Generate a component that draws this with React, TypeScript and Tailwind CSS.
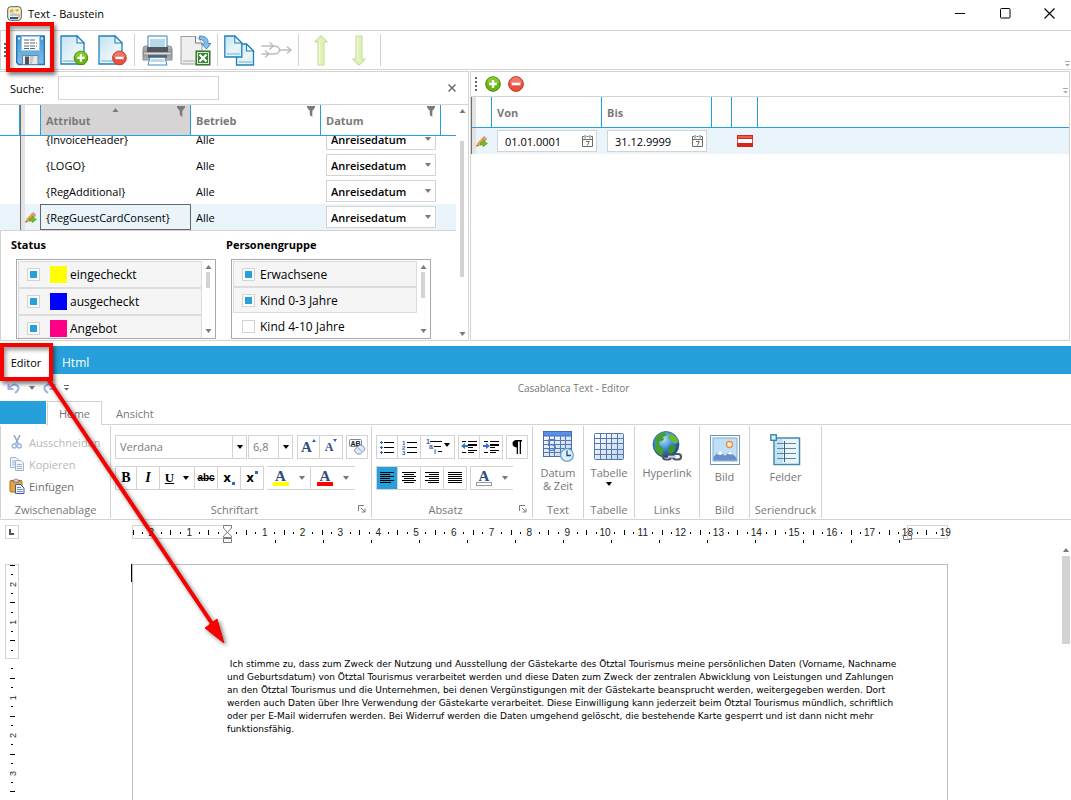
import React, { useState } from "react";

/* ---------- shared glyphs ---------- */

function Triangle({ up = false, className = "" }: { up?: boolean; className?: string }) {
  return (
    <svg width="7" height="4" viewBox="0 0 7 4" className={className} aria-hidden="true">
      <path d={up ? "M0.5 4L3.5 0L6.5 4Z" : "M0.5 0L3.5 4L6.5 0Z"} fill="currentColor" />
    </svg>
  );
}

function SmallTriangle({ className = "" }: { className?: string }) {
  return (
    <svg width="6" height="4" viewBox="0 0 6 4" className={className} aria-hidden="true">
      <path d="M0 0H6L3.5 3.5H2.5Z" fill="currentColor" />
    </svg>
  );
}

function Funnel() {
  return (
    <svg width="8" height="11" viewBox="0 0 8 11" aria-hidden="true">
      <path d="M0 0H8V1.5L5.3 5V11L2.8 9V5L0 1.5Z" fill="#7a7a7a" />
    </svg>
  );
}

function PencilPlus() {
  return (
    <svg width="12" height="11" viewBox="0 0 12 11" aria-hidden="true">
      <path d="M0.5 10.2L2 6.8L6.5 2L9.5 4.5L4.5 9.3Z" fill="#e9a23b" stroke="#c08a35" strokeWidth="0.5" />
      <path d="M6.5 2L8.3 0.6L10.8 2.8L9.5 4.5Z" fill="#e9a49b" stroke="#96655f" strokeWidth="0.5" />
      <path d="M0.3 10.6L1 8.9L2.2 10Z" fill="#555" />
      <path d="M4.5 6.7H7V4.2L11.5 7.5L7 10.8V8.9H4.5Z" fill="#6cbd27" stroke="#4c9416" strokeWidth="0.5" />
    </svg>
  );
}

function PlusBadge({ x = 0, y = 0, s = 1 }: { x?: number; y?: number; s?: number }) {
  return (
    <g transform={`translate(${x} ${y}) scale(${s})`}>
      <circle cx="8" cy="8" r="7.3" fill="#69b512" stroke="#478a0b" strokeWidth="1" />
      <path d="M2 7a6 6 0 0 1 12 0q-6 2-12 0Z" fill="#8fd03a" opacity="0.75" />
      <path d="M8 4V12M4 8H12" stroke="#fff" strokeWidth="2.4" />
    </g>
  );
}

function MinusBadge({ x = 0, y = 0, s = 1 }: { x?: number; y?: number; s?: number }) {
  return (
    <g transform={`translate(${x} ${y}) scale(${s})`}>
      <circle cx="8" cy="8" r="7.4" fill="#ea4f3d" stroke="#c63a2c" strokeWidth="1" />
      <path d="M2 7a6 6 0 0 1 12 0q-6 2-12 0Z" fill="#f5877a" opacity="0.7" />
      <path d="M3.6 8H12.4" stroke="#fff" strokeWidth="2.6" />
    </g>
  );
}

function SheetShape({ x = 0, y = 0, w = 23, h = 28 }: { x?: number; y?: number; w?: number; h?: number }) {
  const f = 7;
  return (
    <g transform={`translate(${x} ${y})`}>
      <path d={`M0 0H${w - f}L${w} ${f}V${h}H0Z`} fill="url(#sheet)" stroke="#2280b8" strokeWidth="1.3" />
      <path d={`M${w - f} 0V${f}H${w}Z`} fill="#eef8fc" stroke="#2280b8" strokeWidth="1.1" />
      <path d={`M2 ${h - 4}H${w - 2}V${h - 2}H2Z`} fill="#a8d3e4" />
    </g>
  );
}

function Defs() {
  return (
    <svg width="0" height="0" className="absolute" aria-hidden="true">
      <defs>
        <linearGradient id="sheet" x1="0" y1="0" x2="1" y2="1">
          <stop offset="0" stopColor="#c4e2ef" />
          <stop offset="0.6" stopColor="#e9f5fa" />
          <stop offset="1" stopColor="#d4eaf3" />
        </linearGradient>
        <linearGradient id="blueV" x1="0" y1="0" x2="0" y2="1">
          <stop offset="0" stopColor="#4298d6" />
          <stop offset="1" stopColor="#7fc0ec" />
        </linearGradient>
        <linearGradient id="greyV" x1="0" y1="0" x2="0" y2="1">
          <stop offset="0" stopColor="#b9bcc1" />
          <stop offset="0.5" stopColor="#8c9096" />
          <stop offset="1" stopColor="#b4b7bb" />
        </linearGradient>
        <linearGradient id="gridV" x1="0" y1="0" x2="1" y2="1">
          <stop offset="0" stopColor="#ffffff" />
          <stop offset="1" stopColor="#bcd3ee" />
        </linearGradient>
        <radialGradient id="globe" cx="0.4" cy="0.3" r="0.7">
          <stop offset="0" stopColor="#b8e3fb" />
          <stop offset="0.5" stopColor="#3b8fdc" />
          <stop offset="1" stopColor="#123f95" />
        </radialGradient>
      </defs>
    </svg>
  );
}

/* ---------- main toolbar icons ---------- */

const SaveIcon = () => (
  <svg width="29" height="31" viewBox="0 0 29 31" aria-hidden="true">
    <path d="M0.7 1H28.3V29.5H2.5L0.7 27.5Z" fill="url(#blueV)" stroke="#2476b4" strokeWidth="1.4" />
    <rect x="5.5" y="1.5" width="18" height="14" fill="#fbfdfe" stroke="#9cc8e4" />
    <path d="M8 5H20M8 8H21M8 11H21M8 13.5H20" stroke="#5d6871" strokeWidth="1" strokeDasharray="5 1" />
    <path d="M2 2.5H4V4.5H2ZM25 2.5H27V4.5H25Z" fill="#d9eefb" />
    <path d="M6.5 29.5V20.5H22V29.5Z" fill="#e8eaec" stroke="#738798" />
    <rect x="9" y="21.5" width="4" height="8" fill="#4d545c" />
    <path d="M14 21H18L16 29H14Z" fill="#c3c8cd" />
  </svg>
);

const NewIcon = () => (
  <svg width="29" height="31" viewBox="0 0 29 31" aria-hidden="true">
    <SheetShape x={1} y={1} />
    <PlusBadge x={13.5} y={15.5} s={0.93} />
  </svg>
);

const DeleteIcon = () => (
  <svg width="29" height="31" viewBox="0 0 29 31" aria-hidden="true">
    <SheetShape x={1} y={1} />
    <MinusBadge x={14} y={15.5} s={0.93} />
  </svg>
);

const PrintIcon = () => (
  <svg width="31" height="31" viewBox="0 0 31 31" aria-hidden="true">
    <path d="M1 14Q1 11 4 11H27Q30 11 30 14V25H1Z" fill="url(#greyV)" stroke="#85898e" />
    <path d="M6 1H25V14H6Z" fill="#fff" stroke="#2d81bd" />
    <path d="M8 4H23V12H8Z" fill="#b6d9ec" />
    <path d="M5 12H26V17H5Z" fill="#53575c" />
    <path d="M2 18.5H29" stroke="#d8dadd" strokeWidth="1.5" />
    <path d="M6 20H25V23H6Z" fill="#606469" />
    <path d="M8 22.5H23L25 30H6Z" fill="#fff" stroke="#3e8fc3" />
    <path d="M9 24H22L23 27H8Z" fill="#b9dcec" />
  </svg>
);

const ExportIcon = () => (
  <svg width="31" height="31" viewBox="0 0 31 31" aria-hidden="true">
    <path d="M1 1.5H16L22 7.5V29H1Z" fill="#efefef" stroke="#9d9d9d" />
    <path d="M15.5 1.5V8H22" fill="#fff" stroke="#777" />
    <path d="M3 25H15V27H3Z" fill="#cdcdcd" />
    <path d="M19.5 1C26 1 28.5 4 28 8.5H31L26.5 14L21.5 9H24.5C24.5 6 23 4.7 19.5 4.3Z" fill="#86bde8" stroke="#3780ba" strokeWidth="0.9" />
    <rect x="16" y="16" width="14" height="14" fill="#3b8133" stroke="#2e6f28" />
    <rect x="17.5" y="17.5" width="11" height="11" fill="none" stroke="#dbeed4" />
    <path d="M19.5 19.5L26.5 26.5M26.5 19.5L19.5 26.5" stroke="#fff" strokeWidth="2.2" />
  </svg>
);

const CopyIcon = () => (
  <svg width="31" height="31" viewBox="0 0 31 31" aria-hidden="true">
    <SheetShape x={12.5} y={9} w={17} h={21} />
    <SheetShape x={0.8} y={1} w={17} h={21} />
  </svg>
);

const MergeIcon = () => (
  <svg width="31" height="18" viewBox="0 0 31 18" fill="none" stroke="#bcbcbc" strokeWidth="1.4" aria-hidden="true">
    <path d="M0.5 5H12C17 5 18.5 7 18.5 9S17 13 12 13H0.5M18.5 9H30M8.5 1.5L12.5 5L8.5 8.5M4 9.5L8 13L4 16.5M26 5.5L30 9L26 12.5" />
  </svg>
);

const BigArrow = ({ down = false }: { down?: boolean }) => (
  <svg width="14" height="31" viewBox="0 0 14 31" aria-hidden="true">
    <path
      d={down ? "M4 1H10V24H13.3L7 30.3L0.7 24H4Z" : "M4 30H10V7H13.3L7 0.7L0.7 7H4Z"}
      fill="#e2f1b6"
      stroke="#c6dfa0"
      strokeWidth="1.1"
    />
    <path d={down ? "M5 2H6V25H5Z" : "M5 6H6V29H5Z"} fill="#f3f9dc" />
  </svg>
);

function ToolButton({ label, className, children }: { label: string; className: string; children: React.ReactNode }) {
  return (
    <button type="button" aria-label={label} className={`relative flex shrink-0 items-center justify-center ${className}`}>
      {children}
    </button>
  );
}

const ToolDivider = () => <span className="h-8 w-px shrink-0 bg-[#d4d2d3]" />;

/* ---------- title bar and toolbar ---------- */

function TitleBar() {
  return (
    <header className="flex h-[30px] shrink-0 items-center bg-white pl-[7px]">
      <svg width="15" height="15" viewBox="0 0 15 15" className="mb-1" aria-hidden="true">
        <rect x="0.7" y="0.7" width="13.6" height="13.6" rx="3" fill="#f6f2e0" stroke="#555" />
        <path d="M2.5 4L6 2.5L7 6L3 7ZM8 3H12V5L9 6Z" fill="#e5b53c" />
        <path d="M3 8L7 7L12 8.5V10H3Z" fill="#b9c7c9" />
        <path d="M3 11H11V13H3Z" fill="#24579a" />
        <path d="M11 7L13 8V12H11Z" fill="#e2c468" />
      </svg>
      <h1 className="ml-[6px] flex-1 pb-[2px] text-[11px] leading-4 text-black">Text - Baustein</h1>
      <div className="flex h-full pb-1">
        <button type="button" aria-label="Minimieren" className="flex w-[46px] items-center justify-center">
          <svg width="10" height="10" viewBox="0 0 10 10"><path d="M0 5.5H10" stroke="#000" /></svg>
        </button>
        <button type="button" aria-label="Maximieren" className="flex w-[45px] items-center justify-center">
          <svg width="11" height="11" viewBox="0 0 11 11"><rect x="0.5" y="0.5" width="9.5" height="9.5" rx="1" fill="none" stroke="#000" /></svg>
        </button>
        <button type="button" aria-label="Schließen" className="flex w-[43px] items-center justify-center">
          <svg width="11" height="11" viewBox="0 0 11 11"><path d="M0.5 0.5L10.5 10.5M10.5 0.5L0.5 10.5" stroke="#000" strokeWidth="1.1" /></svg>
        </button>
      </div>
    </header>
  );
}

function Grip() {
  return (
    <svg width="3" height="14" viewBox="0 0 3 14" className="shrink-0" aria-hidden="true">
      <path d="M0 0H2V2H0ZM0 4H2V6H0ZM0 8H2V10H0ZM0 12H2V14H0Z" fill="#666" />
    </svg>
  );
}

function Overflow() {
  return (
    <svg width="7" height="6" viewBox="0 0 7 6" aria-hidden="true">
      <path d="M1 0.5H6" stroke="#aaa" />
      <path d="M1 3H6L3.5 5.5Z" fill="#aaa" />
    </svg>
  );
}

function MainToolbar() {
  return (
    <div role="toolbar" className="flex h-10 shrink-0 items-center border border-r-0 border-[#d4d2d3] pl-[3px]">
      <Grip />
      <ToolButton label="Speichern" className="ml-[3px] h-8 w-10">
        <SaveIcon />
        <span className="pointer-events-none absolute -left-1 -top-3 h-[50px] w-12 border-4 border-[#f70000] shadow-[2px_3px_4px_rgba(0,0,0,0.5),inset_2px_3px_4px_rgba(0,0,0,0.4)]" />
      </ToolButton>
      <ToolButton label="Neu" className="ml-[9px] h-8 w-[30px]"><NewIcon /></ToolButton>
      <ToolButton label="Löschen" className="ml-2 h-8 w-[30px]"><DeleteIcon /></ToolButton>
      <div className="mx-[7px] flex"><ToolDivider /></div>
      <ToolButton label="Drucken" className="h-8 w-[31px]"><PrintIcon /></ToolButton>
      <ToolButton label="Exportieren" className="ml-[7px] h-8 w-[31px]"><ExportIcon /></ToolButton>
      <div className="mx-[6px] flex"><ToolDivider /></div>
      <ToolButton label="Kopieren" className="h-8 w-[31px]"><CopyIcon /></ToolButton>
      <ToolButton label="Zusammenführen" className="ml-[6px] h-8 w-[31px]"><MergeIcon /></ToolButton>
      <div className="ml-[6px] flex"><ToolDivider /></div>
      <ToolButton label="Nach oben" className="ml-[6px] h-8 w-[31px]"><BigArrow /></ToolButton>
      <ToolButton label="Nach unten" className="ml-[7px] h-8 w-[31px]"><BigArrow down /></ToolButton>
      <div className="ml-[6px] flex flex-1"><ToolDivider /></div>
      <div className="self-end pb-[2px]"><Overflow /></div>
    </div>
  );
}

/* ---------- left panel ---------- */

const rows = ["{InvoiceHeader}", "{LOGO}", "{RegAdditional}", "{RegGuestCardConsent}"];

function HeadCell({ title, active = false }: { title: string; active?: boolean }) {
  return (
    <th
      scope="col"
      className={`relative h-[31px] border-b border-r border-[#26a0da] pl-[5px] pt-[2px] text-left font-bold text-[#7a7a7a] ${active ? "border-l bg-[#d6d4d5]" : ""}`}
    >
      {title}
      {active && <Triangle up className="absolute left-[71px] top-[3px] text-[#7a7a7a]" />}
      <span className="absolute right-[5px] top-px"><Funnel /></span>
    </th>
  );
}

function AttributeTable() {
  return (
    <table className="w-full table-fixed border-separate border-spacing-0 text-[11px] leading-4">
      <colgroup>
        <col className="w-5" />
        <col className="w-5" />
        <col className="w-[151px]" />
        <col className="w-[130px]" />
        <col className="w-[120px]" />
        <col />
      </colgroup>
      <thead>
        <tr>
          <th className="border-b border-r border-[#26a0da]" />
          <th className="border-b border-l border-b-[#26a0da] border-l-[#6e6e6e]"><span className="block h-[30px] w-1 bg-[#e3e3e3]" /></th>
          <HeadCell title="Attribut" active />
          <HeadCell title="Betrieb" />
          <HeadCell title="Datum" />
          <th className="border-b border-[#26a0da]" />
        </tr>
      </thead>
      <tbody>
        {rows.map((name, i) => {
          const first = i === 0;
          const selected = i === 3;
          const clip = first ? "h-4" : "h-[26px]";
          return (
            <tr key={name} className={selected ? "bg-[#e9f5fb]" : ""}>
              <td className="p-0" />
              <td className="border-l border-[#6e6e6e] p-0">
                <div className={`flex items-stretch ${clip}`}>
                  <span className="w-1 bg-[#e3e3e3]" />
                  {selected && <span className="flex items-center"><PencilPlus /></span>}
                </div>
              </td>
              <td className="p-0">
                <div className={`flex items-end overflow-hidden ${clip}`}>
                  <span className={`flex h-[26px] flex-1 shrink-0 items-center border pl-[5px] pt-[2px] ${selected ? "border-[#666]" : "border-transparent"}`}>
                    {name}
                  </span>
                </div>
              </td>
              <td className="p-0">
                <div className={`flex items-end overflow-hidden ${clip}`}>
                  <span className="flex h-[26px] shrink-0 items-center pl-[5px] pt-[2px]">Alle</span>
                </div>
              </td>
              <td className="p-0">
                <div className={`flex items-end overflow-hidden ${clip}`}>
                  <span className="flex h-[26px] flex-1 shrink-0 items-center px-[5px]">
                    <span className="relative flex flex-1 items-center">
                      <select
                        aria-label={`Datum ${name}`}
                        className="h-[22px] w-full appearance-none border border-[#d4d2d3] bg-white pl-1 pt-px font-semibold text-black"
                      >
                        <option>Anreisedatum</option>
                      </select>
                      <SmallTriangle className="pointer-events-none absolute right-[5px] text-[#7a7a7a]" />
                    </span>
                  </span>
                </div>
              </td>
              <td className="p-0" />
            </tr>
          );
        })}
      </tbody>
    </table>
  );
}

function ListScroll({ thumb }: { thumb: string }) {
  return (
    <div className="flex w-3 shrink-0 flex-col items-center py-1 text-[#7a7a7a]">
      <Triangle up />
      <span className={`mt-[3px] w-1 bg-[#d4d2d3] ${thumb}`} />
      <Triangle className="mt-auto" />
    </div>
  );
}

const tick =
  "size-[13px] shrink-0 appearance-none border border-[#d4d2d3] bg-white checked:bg-[#26a0da] checked:shadow-[inset_0_0_0_2px_white]";

function StatusList() {
  const items = [
    { label: "eingecheckt", swatch: "bg-[#ffff00]" },
    { label: "ausgecheckt", swatch: "bg-[#0000ff]" },
    { label: "Angebot", swatch: "bg-[#ff0084]" },
  ];
  return (
    <fieldset>
      <legend className="mb-[6px] -ml-[5px] text-[11px] font-bold leading-4">Status</legend>
      <div className="flex h-20 w-[200px] overflow-hidden border border-[#a8a8ad] p-px">
        <ul className="flex-1">
          {items.map((it) => (
            <li key={it.label} className="flex h-[27px] items-center border border-[#dcdcdc] bg-[#f5f5f5] pl-2">
              <label className="flex items-center text-[12px] leading-4">
                <input type="checkbox" defaultChecked className={tick} />
                <span className={`ml-[10px] size-[17px] ${it.swatch}`} />
                <span className="ml-[3px]">{it.label}</span>
              </label>
            </li>
          ))}
        </ul>
        <ListScroll thumb="h-4" />
      </div>
    </fieldset>
  );
}

function GroupList() {
  const items = [
    { label: "Erwachsene", on: true },
    { label: "Kind 0-3 Jahre", on: true },
    { label: "Kind 4-10 Jahre", on: false },
  ];
  return (
    <fieldset>
      <legend className="mb-[6px] -ml-[5px] text-[11px] font-bold leading-4">Personengruppe</legend>
      <div className="flex h-20 w-[200px] overflow-hidden border border-[#a8a8ad] p-px">
        <ul className="flex-1">
          {items.map((it) => (
            <li
              key={it.label}
              className={`flex h-[26px] items-center border pl-2 ${it.on ? "border-[#dcdcdc] bg-[#f5f5f5]" : "border-transparent"}`}
            >
              <label className="flex items-center text-[12px] leading-4">
                <input type="checkbox" defaultChecked={it.on} className={tick} />
                <span className="ml-[5px] pt-[2px]">{it.label}</span>
              </label>
            </li>
          ))}
        </ul>
        <ListScroll thumb="h-[26px]" />
      </div>
    </fieldset>
  );
}

function LeftPanel() {
  return (
    <section className="flex w-[469px] shrink-0 flex-col border-b border-r border-t border-[#d4d2d3]">
      <div className="flex h-8 shrink-0 items-center pl-[10px] pr-3">
        <label htmlFor="suche" className="w-[48px] pt-[2px] text-[11px] leading-4">Suche:</label>
        <input id="suche" type="text" className="h-6 w-[161px] border border-[#d4d2d3] bg-white px-1 text-[11px] outline-none" />
        <button type="button" aria-label="Suche schließen" className="ml-auto">
          <svg width="8" height="8" viewBox="0 0 8 8"><path d="M0.5 0.5L7.5 7.5M7.5 0.5L0.5 7.5" stroke="#666" strokeWidth="1.4" /></svg>
        </button>
      </div>
      <div className="flex flex-1 border-t border-[#d4d2d3]">
        <div className="flex min-w-0 flex-1 flex-col">
          <AttributeTable />
          <div className="flex flex-1 gap-[15px] border-l border-t border-[#d4d2d3] pl-[15px] pt-[6px]">
            <StatusList />
            <GroupList />
          </div>
        </div>
        <div className="flex w-3 shrink-0 flex-col items-center py-1 text-[#7a7a7a]">
          <Triangle up />
          <span className="mt-[28px] h-[136px] w-1 bg-[#d4d2d3]" />
          <Triangle className="mt-auto" />
        </div>
      </div>
    </section>
  );
}

/* ---------- right panel ---------- */

function DateField({ label, value }: { label: string; value: string }) {
  return (
    <div className="ml-[5px] flex h-[22px] w-[100px] items-center border border-[#d4d2d3] bg-white pl-[7px] pr-[3px]">
      <input aria-label={label} defaultValue={value} className="w-full min-w-0 flex-1 bg-transparent pt-px text-[11px] leading-4 outline-none" />
      <button type="button" aria-label={`${label} auswählen`}>
        <svg width="11" height="12" viewBox="0 0 11 12" fill="none" stroke="#6a6a6a" aria-hidden="true">
          <path d="M2 1.5H0.5V11.5H10.5V1.5H9M4.5 1.5H6.5M0.5 4.5H10.5M3 0V3.5M8 0V3.5M4 6.5H7.3L5.3 10.5" />
        </svg>
      </button>
    </div>
  );
}

function RightPanel() {
  const head = "h-[31px] border-b border-r border-[#26a0da] pl-[5px] pt-px text-left font-bold text-[#7a7a7a]";
  return (
    <section className="flex min-w-0 flex-1 flex-col border border-[#d4d2d3]">
      <div role="toolbar" className="flex h-[25px] shrink-0 items-center border-b border-[#d4d2d3] pl-1">
        <Grip />
        <button type="button" aria-label="Hinzufügen" className="ml-[7px]">
          <svg width="16" height="16" viewBox="0 0 16 16"><PlusBadge /></svg>
        </button>
        <button type="button" aria-label="Entfernen" className="ml-[7px]">
          <svg width="16" height="16" viewBox="0 0 16 16"><MinusBadge /></svg>
        </button>
        <span className="ml-auto self-end pb-[2px]"><Overflow /></span>
      </div>
      <table className="w-full table-fixed border-separate border-spacing-0 text-[11px] leading-4">
        <colgroup>
          <col className="w-[21px]" />
          <col className="w-[110px]" />
          <col className="w-[110px]" />
          <col className="w-5" />
          <col className="w-[26px]" />
          <col />
        </colgroup>
        <thead>
          <tr>
            <th className="border-b border-l border-r border-[#26a0da] border-l-[#6e6e6e] p-0"><span className="block h-[30px] w-1 bg-[#e3e3e3]" /></th>
            <th scope="col" className={head}>Von</th>
            <th scope="col" className={head}>Bis</th>
            <th className={head} />
            <th className={head} />
            <th className="border-b border-[#26a0da]" />
          </tr>
        </thead>
        <tbody>
          <tr className="bg-[#e9f5fb]">
            <td className="border-l border-[#6e6e6e] p-0">
              <div className="flex h-[26px] items-center"><span className="h-full w-1 bg-[#e3e3e3]" /><PencilPlus /></div>
            </td>
            <td className="p-0"><DateField label="Von" value="01.01.0001" /></td>
            <td className="p-0"><DateField label="Bis" value="31.12.9999" /></td>
            <td className="p-0" />
            <td className="p-0 pl-[5px]">
              <svg width="16" height="12" viewBox="0 0 16 12" aria-hidden="true">
                <rect width="16" height="12" fill="#d8261a" />
                <path d="M1 1H15V3H1Z" fill="#ef5a4e" />
                <path d="M0.8 4H15.2V8H0.8Z" fill="#fff" />
              </svg>
            </td>
            <td className="p-0" />
          </tr>
        </tbody>
      </table>
    </section>
  );
}

/* ---------- callout arrow ---------- */

function CalloutArrow() {
  return (
    <svg
      width="190"
      height="275"
      viewBox="0 0 190 275"
      className="pointer-events-none absolute left-[43px] top-[28px] z-20 drop-shadow-[2px_2px_2px_rgba(0,0,0,0.5)]"
      aria-hidden="true"
    >
      <path d="M5 5L172 254" stroke="#f70000" strokeWidth="4" />
      <path d="M181 269L162 254L174 245Z" fill="#f70000" stroke="#f70000" />
    </svg>
  );
}

/* ---------- ribbon ---------- */

const box = "flex h-6 border border-[#d4d2d3] divide-x divide-[#d4d2d3]";

function IconButton({ label, className = "w-[22px]", children }: { label: string; className?: string; children: React.ReactNode }) {
  return (
    <button type="button" aria-label={label} title={label} className={`flex shrink-0 items-center justify-center ${className}`}>
      {children}
    </button>
  );
}

function Launcher() {
  return (
    <button type="button" aria-label="Dialog öffnen" className="mr-[5px] self-center">
      <svg width="8" height="8" viewBox="0 0 8 8" fill="none" stroke="#7a7a7a">
        <path d="M0.5 6V0.5H6M3 3L6.5 6.5M7 3.5V7H3.5" />
      </svg>
    </button>
  );
}

function Group({ title, launcher = false, className, children }: { title: string; launcher?: boolean; className: string; children: React.ReactNode }) {
  return (
    <section aria-label={title} className={`my-px flex shrink-0 flex-col border-r border-[#d4d2d3] ${className}`}>
      <div className="flex-1">{children}</div>
      <div className="flex h-[18px] items-center">
        <span className="flex-1 whitespace-nowrap pt-px text-center text-[11px] leading-4">{title}</span>
        {launcher && <Launcher />}
      </div>
    </section>
  );
}

const Lines = ({ d }: { d: string }) => (
  <svg width="16" height="14" viewBox="0 0 16 14" shapeRendering="crispEdges" aria-hidden="true">
    <path d={d} stroke="#000" fill="none" />
  </svg>
);

function LetterA({ bar }: { bar: string }) {
  return (
    <span className="flex flex-col items-center">
      <span className="font-['Liberation_Serif',serif] text-[15px] font-bold leading-[12px] text-[#2e4a80]">A</span>
      <span className={`h-1 w-4 ${bar}`} />
    </span>
  );
}

const BulletsIcon = () => (
  <svg width="14" height="14" viewBox="0 0 14 14" shapeRendering="crispEdges" aria-hidden="true">
    <path d="M4 2.5H14M4 7.5H14M4 12.5H14" stroke="#000" />
    <path d="M0 2.5H3M1.5 1V4M0 7.5H3M1.5 6V9M0 12.5H3M1.5 11V14" stroke="#3b62b0" />
  </svg>
);

const NumbersIcon = () => (
  <svg width="15" height="15" viewBox="0 0 15 15" aria-hidden="true">
    <path d="M5 2.5H15M5 7.5H15M5 12.5H15" stroke="#000" shapeRendering="crispEdges" />
    <g fill="#3b62b0" fontFamily="Liberation Sans, sans-serif" fontSize="6" fontWeight="bold">
      <text x="0" y="5">1</text>
      <text x="0" y="10">2</text>
      <text x="0" y="15">3</text>
    </g>
  </svg>
);

const MultiIcon = () => (
  <svg width="17" height="16" viewBox="0 0 17 16" aria-hidden="true">
    <path d="M4 2.5H16M8 7.5H15M12 12.5H16" stroke="#000" shapeRendering="crispEdges" />
    <g fill="#3b62b0" fontFamily="Liberation Sans, sans-serif" fontSize="7" fontWeight="bold">
      <text x="0" y="5">1</text>
      <text x="3" y="10">a</text>
      <text x="8" y="15">i</text>
    </g>
  </svg>
);

const IndentIcon = ({ right = false }: { right?: boolean }) => (
  <svg width="17" height="14" viewBox="0 0 17 14" aria-hidden="true">
    <path d="M1 1.5H5M7 1.5H16M7 7.5H12M7 10.5H16M1 12.5H5M7 12.5H13" stroke="#000" shapeRendering="crispEdges" />
    <path d="M7 4H16V6H7Z" fill="#000" />
    <path d={right ? "M0 5H3V3L7 6L3 9V7H0Z" : "M7 5H4V3L0 6L4 9V7H7Z"} fill="#3173d1" />
  </svg>
);

function RibbonClipboard() {
  return (
    <Group title="Zwischenablage" className="w-[111px] border-l">
      <div className="flex flex-col pl-2 pt-[5px] text-[11px] leading-4">
        <button type="button" className="flex h-[22px] items-center gap-1 text-[#b8b8b8]">
          <svg width="16" height="16" viewBox="0 0 16 16" fill="none" aria-hidden="true">
            <path d="M5 1L9.5 10M11 1L6.5 10" stroke="#96a6bf" strokeWidth="1.6" />
            <circle cx="5.3" cy="12" r="2" stroke="#9fb6e2" strokeWidth="1.6" />
            <circle cx="10.3" cy="12" r="2" stroke="#9fb6e2" strokeWidth="1.6" />
          </svg>
          <span className="pt-px">Ausschneiden</span>
        </button>
        <button type="button" className="flex h-[22px] items-center gap-1 text-[#b8b8b8]">
          <svg width="16" height="16" viewBox="0 0 16 16" fill="#f3f6fb" stroke="#a2b4d4" aria-hidden="true">
            <path d="M1.5 1.5H7L9.5 4V11.5H1.5ZM3 5H8M3 7H8M3 9H8" />
            <path d="M6.5 4.5H12L14.5 7V14.5H6.5ZM8 8.5H13M8 10.5H13M8 12.5H13" />
          </svg>
          <span className="pt-px">Kopieren</span>
        </button>
        <button type="button" className="flex h-[22px] items-center gap-1 text-[#6d6d6d]">
          <svg width="16" height="16" viewBox="0 0 16 16" aria-hidden="true">
            <rect x="1" y="2.5" width="12" height="11.5" rx="1" fill="#e8a33a" stroke="#a86d1c" />
            <path d="M4 4V2H5.5Q7 -0.5 8.5 2H10V4Z" fill="#dbe2ec" stroke="#566176" strokeWidth="0.8" />
            <path d="M6.5 6.5H11.5L15 10V15.5H6.5Z" fill="#eef3fb" stroke="#3d5f96" />
            <path d="M8 9.5H12M8 11.5H13.5M8 13.5H13.5" stroke="#6d8ec3" />
          </svg>
          <span className="pt-px">Einfügen</span>
        </button>
      </div>
    </Group>
  );
}

function RibbonFont() {
  const serif = "font-['Liberation_Serif',serif] text-black";
  return (
    <Group title="Schriftart" launcher className="w-[261px]">
      <div className="flex flex-col gap-[7px] pl-1 pt-[9px] text-black">
        <div className="flex">
          <span className="relative flex h-6 w-[132px]">
            <select aria-label="Schriftart" className="w-full appearance-none border border-[#d4d2d3] pl-1 pt-px text-[11px] text-[#7a7a7a]">
              <option>Verdana</option>
            </select>
            <span className="pointer-events-none absolute inset-y-0 right-0 flex w-[15px] items-center justify-center border-l border-[#d4d2d3]"><SmallTriangle /></span>
          </span>
          <span className="relative ml-px flex h-6 w-[45px]">
            <select aria-label="Schriftgröße" className="w-full appearance-none border border-[#d4d2d3] pl-1 pt-px text-[11px] text-[#7a7a7a]">
              <option>6,8</option>
            </select>
            <span className="pointer-events-none absolute inset-y-0 right-0 flex w-[15px] items-center justify-center border-l border-[#d4d2d3]"><SmallTriangle /></span>
          </span>
          <div className={`ml-1 ${box}`}>
            <IconButton label="Schrift vergrößern">
              <span className="flex font-['Liberation_Serif',serif] text-[15px] font-bold leading-4 text-[#2e4a80]">A<svg width="4" height="3" viewBox="0 0 4 3"><path d="M0 3L2 0L4 3Z" fill="#2e5cc0" /></svg></span>
            </IconButton>
            <IconButton label="Schrift verkleinern">
              <span className="flex font-['Liberation_Serif',serif] text-[12px] font-bold leading-4 text-[#2e4a80]">A<svg width="4" height="3" viewBox="0 0 4 3"><path d="M0 0H4L2 3Z" fill="#2e5cc0" /></svg></span>
            </IconButton>
          </div>
          <div className={`ml-[3px] ${box}`}>
            <IconButton label="Formatierung löschen" className="w-5">
              <svg width="17" height="16" viewBox="0 0 17 16" aria-hidden="true">
                <rect x="0.5" y="0.5" width="12" height="7" rx="1" fill="#f7f9fc" stroke="#7d8796" />
                <text x="1.5" y="6.5" fontSize="7" fontWeight="bold" fill="#222" fontFamily="Liberation Sans, sans-serif">AB</text>
                <path d="M5.5 11L10 6.5Q12 5 14.5 7.5Q16.5 9.5 15.5 11L11.5 15Q9 16 6.5 13.5Z" fill="#e3eaf7" stroke="#7c92bb" />
                <path d="M8.5 8.5L13 12.7" stroke="#8ca1c8" />
              </svg>
            </IconButton>
          </div>
        </div>
        <div className="flex">
          <div className={box}>
            <IconButton label="Fett" className="w-[21px]"><span className={`${serif} text-[14px] font-bold leading-4`}>B</span></IconButton>
            <IconButton label="Kursiv" className="w-[23px]"><span className={`${serif} text-[14px] font-bold italic leading-4`}>I</span></IconButton>
            <IconButton label="Unterstrichen" className="w-[35px] gap-[9px]"><span className={`${serif} text-[13px] font-bold leading-4 underline`}>U</span><SmallTriangle /></IconButton>
            <IconButton label="Durchgestrichen" className="w-[23px]"><span className="font-['Liberation_Sans',sans-serif] text-[10px] font-bold leading-4 line-through">abc</span></IconButton>
            <IconButton label="Tiefgestellt" className="w-[23px]">
              <span className="flex items-end font-['DejaVu_Sans',sans-serif] text-[12px] font-bold leading-[14px]">x<span className="ml-px size-[3px] bg-[#3b62c0]" /></span>
            </IconButton>
            <IconButton label="Hochgestellt" className="w-[22px]">
              <span className="flex items-start font-['DejaVu_Sans',sans-serif] text-[12px] font-bold leading-[14px]">x<span className="ml-px size-[3px] bg-[#3b62c0]" /></span>
            </IconButton>
          </div>
          <div className="ml-[3px] flex h-6 divide-x divide-[#d4d2d3] border-y border-[#d4d2d3] text-[#7a7a7a]">
            <IconButton label="Hervorheben" className="w-11 gap-[10px]"><LetterA bar="bg-[#ffff00]" /><SmallTriangle /></IconButton>
            <IconButton label="Schriftfarbe" className="w-11 gap-[10px]"><LetterA bar="bg-[#ff0000]" /><SmallTriangle /></IconButton>
          </div>
        </div>
      </div>
    </Group>
  );
}

function RibbonParagraph() {
  return (
    <Group title="Absatz" launcher className="w-[161px]">
      <div className="flex flex-col gap-[7px] pl-1 pt-[9px] text-black">
        <div className="flex">
          <div className={box}>
            <IconButton label="Aufzählung" className="w-[21px]"><BulletsIcon /></IconButton>
            <IconButton label="Nummerierung" className="w-[23px]"><NumbersIcon /></IconButton>
            <IconButton label="Liste mit mehreren Ebenen" className="w-[33px] gap-px"><MultiIcon /><SmallTriangle className="-mt-1" /></IconButton>
          </div>
          <div className={`ml-[3px] ${box}`}>
            <IconButton label="Einzug verkleinern" className="w-[21px]"><IndentIcon /></IconButton>
            <IconButton label="Einzug vergrößern"><IndentIcon right /></IconButton>
          </div>
          <div className={`ml-[3px] ${box}`}>
            <IconButton label="Absatzmarken" className="w-5">
              <svg width="10" height="14" viewBox="0 0 10 14" aria-hidden="true"><path d="M4 0H10V1.5H9V14H7.7V1.5H6V14H4.7V7.5Q0.5 7 0.5 3.8T4 0Z" fill="#000" /></svg>
            </IconButton>
          </div>
        </div>
        <div className="flex">
          <div className={box}>
            <IconButton label="Linksbündig" className="w-[21px] bg-[#26a0da]"><Lines d="M1 1.5H15M1 3.5H11M1 5.5H15M1 7.5H11M1 9.5H15M1 11.5H12" /></IconButton>
            <IconButton label="Zentriert" className="w-[23px]"><Lines d="M1 1.5H15M3 3.5H13M1 5.5H15M3 7.5H13M1 9.5H15M3 11.5H13" /></IconButton>
            <IconButton label="Rechtsbündig" className="w-[23px]"><Lines d="M1 1.5H15M5 3.5H15M1 5.5H15M5 7.5H15M1 9.5H15M4 11.5H15" /></IconButton>
            <IconButton label="Blocksatz"><Lines d="M1 1.5H15M1 3.5H15M1 5.5H15M1 7.5H15M1 9.5H15M1 11.5H15" /></IconButton>
          </div>
          <div className="ml-[3px] flex h-6 border-y border-l border-[#d4d2d3] text-[#7a7a7a]">
            <IconButton label="Schattierung" className="w-[42px] gap-[10px]"><LetterA bar="border border-[#999] bg-white" /><SmallTriangle /></IconButton>
          </div>
        </div>
      </div>
    </Group>
  );
}

function BigButton({ icon, children, className = "" }: { icon: React.ReactNode; children: React.ReactNode; className?: string }) {
  return (
    <button type="button" className={`flex w-full flex-col items-center whitespace-nowrap text-[11px] leading-[13px] ${className}`}>
      <span className="mb-1 flex h-8 items-center">{icon}</span>
      {children}
    </button>
  );
}

const GridLines = ({ w, h, top }: { w: number; h: number; top: number }) => {
  const xs = [1, 2, 3, 4].map((i) => Math.round((w * i) / 5) + 0.5);
  const ys = [1, 2, 3, 4].map((i) => top + Math.round(((h - top) * i) / 5) + 0.5);
  return <path d={xs.map((x) => `M${x} ${top}V${h}`).join("") + ys.map((y) => `M1 ${y}H${w}`).join("")} stroke="#5479ad" shapeRendering="crispEdges" />;
};

function RibbonLarge() {
  return (
    <>
      <Group title="Text" className="w-[51px]">
        <BigButton
          className="pt-1"
          icon={
            <svg width="31" height="31" viewBox="0 0 31 31" aria-hidden="true">
              <rect x="0.5" y="0.5" width="28" height="25" fill="url(#gridV)" stroke="#4a6ea8" />
              <rect x="0.5" y="0.5" width="28" height="4.5" fill="#5b8fe6" stroke="#3c6cc4" />
              <GridLines w={28} h={25} top={5} />
              <text x="4" y="20" fontSize="17" fill="#4b78ca" fontFamily="Liberation Sans, sans-serif">5</text>
              <circle cx="24" cy="24" r="6.3" fill="#dceffa" stroke="#6fa3ce" strokeWidth="1.3" />
              <path d="M24 19.5V24.5H28" stroke="#244d7d" fill="none" strokeWidth="1.3" />
            </svg>
          }
        >
          <span>Datum</span>
          <span>&amp; Zeit</span>
        </BigButton>
      </Group>
      <Group title="Tabelle" className="w-[51px]">
        <BigButton
          className="pt-1"
          icon={
            <svg width="30" height="28" viewBox="0 0 30 28" aria-hidden="true">
              <rect x="0.5" y="1.5" width="29" height="26" rx="1" fill="url(#gridV)" stroke="#5479ad" />
              <GridLines w={29} h={27} top={1} />
            </svg>
          }
        >
          Tabelle
          <SmallTriangle className="mt-[3px] text-black" />
        </BigButton>
      </Group>
      <Group title="Links" className="w-[65px]">
        <BigButton
          className="pt-1"
          icon={
            <svg width="31" height="31" viewBox="0 0 31 31" aria-hidden="true">
              <circle cx="14" cy="13.5" r="13" fill="url(#globe)" stroke="#27508f" strokeWidth="0.7" />
              <path d="M3 8Q7 1 13 1.5L15 4L11 6L12 9L7 11L8 15L12 18L10 25Q4 22 2 17L4 14Z" fill="#47a02d" />
              <path d="M18 2Q25 5 26.5 11L23 13L19 10L16 7Z" fill="#6cb93a" />
              <path d="M18 14L24 15L23 20L18 24L15 19Z" fill="#3f9130" />
              <g fill="none" stroke="#4a596d" strokeWidth="2.2">
                <rect x="11" y="23" width="8" height="5.5" rx="2.7" />
                <rect x="21" y="23" width="8" height="5.5" rx="2.7" />
                <path d="M16 25.7H24" stroke="#c8d3df" strokeWidth="2" />
              </g>
            </svg>
          }
        >
          Hyperlink
        </BigButton>
      </Group>
      <Group title="Bild" className="w-[50px]">
        <BigButton
          className="pt-2"
          icon={
            <svg width="30" height="30" viewBox="0 0 30 30" aria-hidden="true">
              <rect x="0.5" y="0.5" width="29" height="29" fill="#fff" stroke="#6d95b6" />
              <rect x="3" y="3" width="24" height="23" fill="#bfe1f8" stroke="#80abd0" />
              <circle cx="19.5" cy="9.5" r="3" fill="#fff3da" stroke="#f08d43" strokeWidth="1.4" />
              <path d="M3.5 25.5V22L10 15L15 21L20 16L26.5 23V25.5Z" fill="#6890c5" />
              <path d="M7 19L10 15L13 19L10 20ZM17.5 19L20 16L23 19.5Z" fill="#fff" />
            </svg>
          }
        >
          Bild
        </BigButton>
      </Group>
      <Group title="Seriendruck" className="w-[72px]">
        <BigButton
          className="pt-2"
          icon={
            <svg width="31" height="32" viewBox="0 0 31 32" aria-hidden="true">
              <rect x="4" y="4" width="25.5" height="26.5" fill="#e8f6fd" stroke="#4786af" strokeWidth="1.5" />
              <path d="M5 5H13V29.5H5Z" fill="#bde4f6" />
              <path d="M7 9.5H26M7 14.5H26M7 19.5H26M7 24.5H26" stroke="#73838e" />
              <path d="M14.5 7V28" stroke="#2f6889" />
              <rect x="0.8" y="0.8" width="5.5" height="5.5" fill="#d9f1fb" stroke="#317ba8" strokeWidth="1.3" />
            </svg>
          }
        >
          Felder
        </BigButton>
      </Group>
    </>
  );
}

/* ---------- rulers ---------- */

const CM = 37.8;

function HorizontalRuler() {
  const zero = 95;
  const marks: React.ReactNode[] = [];
  for (let q = -10; q <= 76; q++) {
    const x = zero + (q * CM) / 4;
    if (q % 4 === 0) {
      if (q !== 0) {
        marks.push(
          <text key={q} x={x} y="12" textAnchor="middle" fontSize="10" fill="#222">
            {Math.abs(q / 4)}
          </text>,
        );
      }
    } else if (q % 2 === 0) {
      marks.push(<rect key={q} x={Math.round(x)} y="6" width="1" height="5" fill="#000" />);
    } else {
      marks.push(<rect key={q} x={Math.round(x)} y="8" width="1" height="2" fill="#000" />);
    }
  }
  const tabs = Array.from({ length: 14 }, (_, i) => zero + 48 * (i + 1));
  return (
    <svg width="822" height="22" viewBox="0 0 822 22" fontFamily="Liberation Sans, sans-serif" className="-mr-[6px] shrink-0" aria-hidden="true">
      <path d="M95 1.5H0.5V14.5H95M775.5 1.5H815.5V14.5H775.5Z" fill="none" stroke="#d4d2d3" />
      {marks}
      {tabs.map((x) => (
        <rect key={x} x={x} y="16" width="1" height="3" fill="#000" />
      ))}
      <g fill="#fff" stroke="#7a7a7a">
        <path d="M91.5 1.5H99.5V4L95.5 8.5L91.5 4ZM91.5 13.5H99.5V12L95.5 8.5L91.5 12ZM91.5 14.5H99.5V18.5H91.5Z" />
        <path d="M771.5 15.5V11L775.5 7.5L779.5 11V15.5Z" fill="none" />
      </g>
    </svg>
  );
}

function VerticalRuler() {
  const marks: React.ReactNode[] = [];
  for (let q = -10; q <= 14; q++) {
    const y = 95 + (q * CM) / 4;
    if (q === 0) continue;
    if (q % 4 === 0) {
      marks.push(
        <text key={q} transform={`translate(11 ${y + 1}) rotate(-90)`} textAnchor="middle" fontSize="9" fill="#222">
          {Math.abs(q / 4)}
        </text>,
      );
    } else if (q % 2 === 0) {
      marks.push(<rect key={q} x="5" y={Math.round(y)} width="5" height="1" fill="#000" />);
    } else {
      marks.push(<rect key={q} x="6" y={Math.round(y)} width="2" height="1" fill="#000" />);
    }
  }
  return (
    <svg width="14" height="236" viewBox="0 0 14 236" fontFamily="Liberation Sans, sans-serif" className="shrink-0" aria-hidden="true">
      <rect x="0.5" y="0.5" width="13" height="94" fill="none" stroke="#d4d2d3" />
      {marks}
    </svg>
  );
}

/* ---------- editor ---------- */

const textLines = [
  "\u00a0Ich stimme zu, dass zum Zweck der Nutzung und Ausstellung der Gästekarte des Ötztal Tourismus meine persönlichen Daten (Vorname, Nachname",
  "und Geburtsdatum) von Ötztal Tourismus verarbeitet werden und diese Daten zum Zweck der zentralen Abwicklung von Leistungen und Zahlungen",
  "an den Ötztal Tourismus und die Unternehmen, bei denen Vergünstigungen mit der Gästekarte beansprucht werden, weitergegeben werden. Dort",
  "werden auch Daten über Ihre Verwendung der Gästekarte verarbeitet. Diese Einwilligung kann jederzeit beim Ötztal Tourismus mündlich, schriftlich",
  "oder per E-Mail widerrufen werden. Bei Widerruf werden die Daten umgehend gelöscht, die bestehende Karte gesperrt und ist dann nicht mehr",
  "funktionsfähig.",
];

function DocumentArea() {
  return (
    <div className="flex min-h-0 flex-1 overflow-hidden">
      <div className="flex w-5 shrink-0 flex-col pl-[5px] pt-[5px]">
        <span className="flex size-[14px] shrink-0 items-center justify-center border border-[#d4d2d3]">
          <svg width="6" height="6" viewBox="0 0 6 6"><path d="M1 0V5H5" stroke="#555" strokeWidth="2" fill="none" /></svg>
        </span>
        <div className="mt-[25px]"><VerticalRuler /></div>
      </div>
      <div className="flex min-w-0 flex-1 flex-col items-center">
        <div className="flex w-[816px] shrink-0 pt-1"><HorizontalRuler /></div>
        <article className="relative mt-[18px] w-[816px] flex-1 border-x border-t border-[#bdbdbd] pl-[94px] pt-[93px]">
          <span className="absolute -left-[2px] -top-px h-[18px] w-px bg-black" />
          <p className="whitespace-nowrap font-['DejaVu_Sans',Verdana,sans-serif] text-[9px] leading-[13px] text-black">
            {textLines.map((line) => (
              <React.Fragment key={line}>
                {line}
                <br />
              </React.Fragment>
            ))}
          </p>
        </article>
      </div>
      <div className="flex w-[11px] shrink-0 flex-col items-center pt-7 text-[#7a7a7a]">
        <SmallTriangle className="rotate-180" />
        <span className="mt-1 h-[88px] w-2 bg-[#d4d2d3]" />
      </div>
    </div>
  );
}

function Editor() {
  const [tab, setTab] = useState("Editor");
  return (
    <section className="flex min-h-0 flex-1 flex-col text-[#777]">
      <div role="tablist" className="flex h-7 shrink-0 bg-[#26a0da] text-[12px] leading-4">
        <div className="relative flex">
          <button
            type="button"
            role="tab"
            aria-selected={tab === "Editor"}
            onClick={() => setTab("Editor")}
            className="flex w-[52px] items-center justify-center bg-white pt-[6px] text-[11px] text-black"
          >
            Editor
          </button>
          <span className="pointer-events-none absolute -top-[3px] left-0 z-10 h-[38px] w-[53px] border-4 border-[#f70000] shadow-[2px_3px_4px_rgba(0,0,0,0.5),inset_2px_3px_4px_rgba(0,0,0,0.4)]" />
          <CalloutArrow />
        </div>
        <button type="button" role="tab" aria-selected={tab === "Html"} onClick={() => setTab("Html")} className="px-[10px] pt-[6px] text-white">
          Html
        </button>
      </div>

      <div className="flex h-[27px] shrink-0 items-center">
        <div className="flex w-[76px] shrink-0 items-center pl-[7px] text-[#777]">
          <button type="button" aria-label="Rückgängig">
            <svg width="13" height="12" viewBox="0 0 13 12" fill="none" stroke="#9db3e4" strokeWidth="2"><path d="M1.5 2V7H6.5M2 6.5Q6 0.5 10 3.5T8 11" /></svg>
          </button>
          <SmallTriangle className="ml-[9px]" />
          <button type="button" aria-label="Wiederholen" className="ml-2">
            <svg width="13" height="12" viewBox="0 0 13 12" fill="none" stroke="#9db3e4" strokeWidth="2"><path d="M11.5 2V7H6.5M11 6.5Q7 0.5 3 3.5T5 11" /></svg>
          </button>
          <svg width="5" height="6" viewBox="0 0 5 6" className="ml-2"><path d="M0 0.5H5" stroke="#666" /><path d="M0 3H5L2.5 5.5Z" fill="#666" /></svg>
        </div>
        <h2 className="flex-1 text-center text-[10px] leading-4">Casablanca Text - Editor</h2>
      </div>

      <div className="flex h-6 shrink-0 items-end text-[11px] leading-4">
        <button type="button" aria-label="Datei" className="h-[23px] w-[46px] self-start bg-[#26a0da]" />
        <span className="h-px w-px bg-[#d4d2d3]" />
        <button type="button" className="h-6 w-[55px] border border-b-0 border-[#d4d2d3] pt-px">Home</button>
        <div className="flex h-6 flex-1 items-center border-b border-[#d4d2d3]">
          <button type="button" className="ml-[14px] pt-[2px]">Ansicht</button>
        </div>
      </div>

      <div className="flex h-[95px] shrink-0 overflow-hidden border-b border-[#d4d2d3]">
        <RibbonClipboard />
        <RibbonFont />
        <RibbonParagraph />
        <RibbonLarge />
      </div>

      <DocumentArea />
    </section>
  );
}

export default function App() {
  return (
    <div className="relative flex h-screen flex-col overflow-hidden bg-white font-['Open_Sans','Noto_Sans',sans-serif] text-black">
      <Defs />
      <TitleBar />
      <MainToolbar />
      <main className="flex min-h-0 flex-1 flex-col pt-px">
        <div className="flex h-[270px] shrink-0 gap-px pr-px">
          <LeftPanel />
          <RightPanel />
        </div>
        <div className="flex min-h-0 flex-1 flex-col pt-[5px]">
          <Editor />
        </div>
      </main>
    </div>
  );
}
